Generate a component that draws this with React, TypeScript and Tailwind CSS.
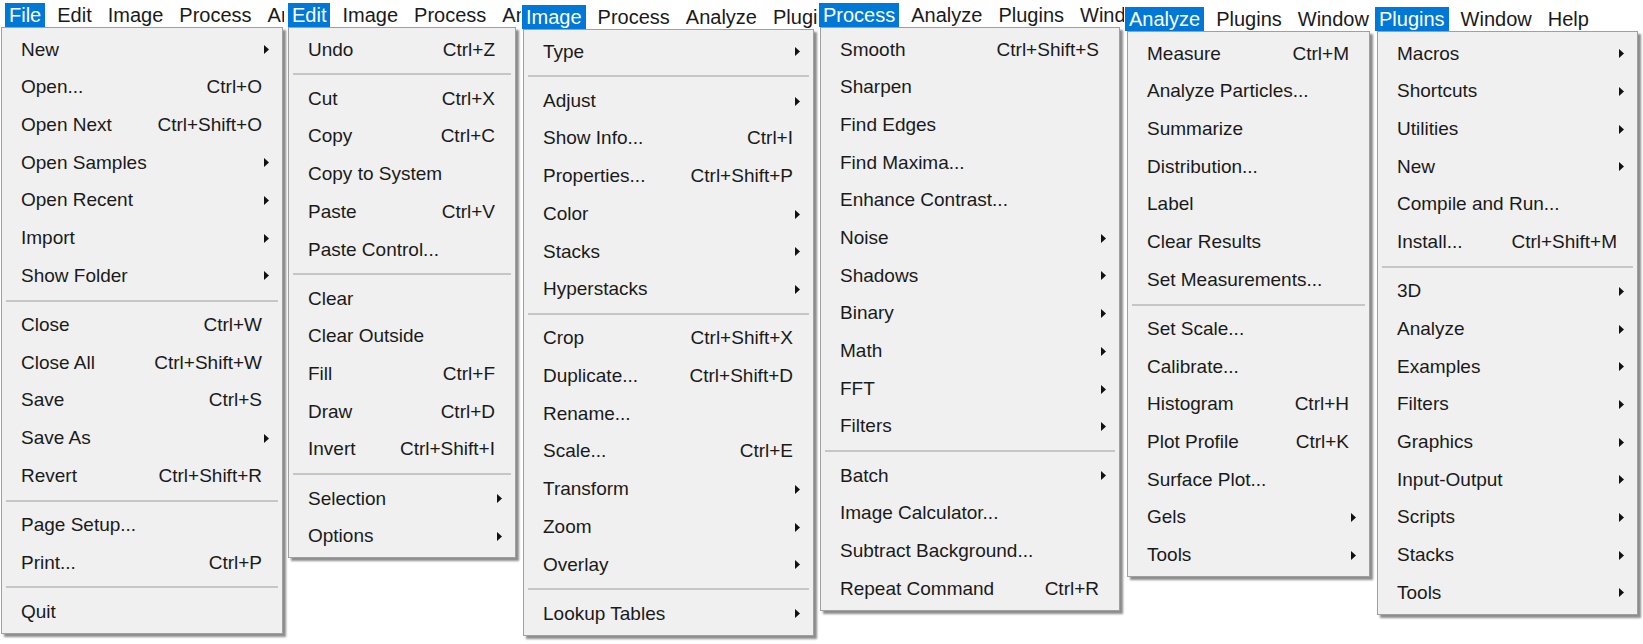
type Row = { label: string; sc?: string; sub?: boolean } | 'sep';

type PanelDef = {
  w: string;
  mt: string;
  barPl: string;
  bar: string[];
  ddMl: string;
  ddW: string;
  items: Row[];
};

const panels: PanelDef[] = [
  {
    w: 'w-[284px]',
    mt: 'mt-[3px]',
    barPl: 'pl-[5px]',
    bar: ['File', 'Edit', 'Image', 'Process', 'Analyze'],
    ddMl: 'ml-[1px]',
    ddW: 'w-[282px]',
    items: [
      { label: 'New', sub: true },
      { label: 'Open...', sc: 'Ctrl+O' },
      { label: 'Open Next', sc: 'Ctrl+Shift+O' },
      { label: 'Open Samples', sub: true },
      { label: 'Open Recent', sub: true },
      { label: 'Import', sub: true },
      { label: 'Show Folder', sub: true },
      'sep',
      { label: 'Close', sc: 'Ctrl+W' },
      { label: 'Close All', sc: 'Ctrl+Shift+W' },
      { label: 'Save', sc: 'Ctrl+S' },
      { label: 'Save As', sub: true },
      { label: 'Revert', sc: 'Ctrl+Shift+R' },
      'sep',
      { label: 'Page Setup...' },
      { label: 'Print...', sc: 'Ctrl+P' },
      'sep',
      { label: 'Quit' },
    ],
  },
  {
    w: 'w-[237px]',
    mt: 'mt-[3px]',
    barPl: 'pl-[4px]',
    bar: ['Edit', 'Image', 'Process', 'Analyze'],
    ddMl: 'ml-[4px]',
    ddW: 'w-[228px]',
    items: [
      { label: 'Undo', sc: 'Ctrl+Z' },
      'sep',
      { label: 'Cut', sc: 'Ctrl+X' },
      { label: 'Copy', sc: 'Ctrl+C' },
      { label: 'Copy to System' },
      { label: 'Paste', sc: 'Ctrl+V' },
      { label: 'Paste Control...' },
      'sep',
      { label: 'Clear' },
      { label: 'Clear Outside' },
      { label: 'Fill', sc: 'Ctrl+F' },
      { label: 'Draw', sc: 'Ctrl+D' },
      { label: 'Invert', sc: 'Ctrl+Shift+I' },
      'sep',
      { label: 'Selection', sub: true },
      { label: 'Options', sub: true },
    ],
  },
  {
    w: 'w-[297px]',
    mt: 'mt-[5px]',
    barPl: 'pl-[1px]',
    bar: ['Image', 'Process', 'Analyze', 'Plugins'],
    ddMl: 'ml-[2px]',
    ddW: 'w-[291px]',
    items: [
      { label: 'Type', sub: true },
      'sep',
      { label: 'Adjust', sub: true },
      { label: 'Show Info...', sc: 'Ctrl+I' },
      { label: 'Properties...', sc: 'Ctrl+Shift+P' },
      { label: 'Color', sub: true },
      { label: 'Stacks', sub: true },
      { label: 'Hyperstacks', sub: true },
      'sep',
      { label: 'Crop', sc: 'Ctrl+Shift+X' },
      { label: 'Duplicate...', sc: 'Ctrl+Shift+D' },
      { label: 'Rename...' },
      { label: 'Scale...', sc: 'Ctrl+E' },
      { label: 'Transform', sub: true },
      { label: 'Zoom', sub: true },
      { label: 'Overlay', sub: true },
      'sep',
      { label: 'Lookup Tables', sub: true },
    ],
  },
  {
    w: 'w-[306px]',
    mt: 'mt-[3px]',
    barPl: 'pl-[1px]',
    bar: ['Process', 'Analyze', 'Plugins', 'Window'],
    ddMl: 'ml-[2px]',
    ddW: 'w-[300px]',
    items: [
      { label: 'Smooth', sc: 'Ctrl+Shift+S' },
      { label: 'Sharpen' },
      { label: 'Find Edges' },
      { label: 'Find Maxima...' },
      { label: 'Enhance Contrast...' },
      { label: 'Noise', sub: true },
      { label: 'Shadows', sub: true },
      { label: 'Binary', sub: true },
      { label: 'Math', sub: true },
      { label: 'FFT', sub: true },
      { label: 'Filters', sub: true },
      'sep',
      { label: 'Batch', sub: true },
      { label: 'Image Calculator...' },
      { label: 'Subtract Background...' },
      { label: 'Repeat Command', sc: 'Ctrl+R' },
    ],
  },
  {
    w: 'w-[250px]',
    mt: 'mt-[7px]',
    barPl: 'pl-[1px]',
    bar: ['Analyze', 'Plugins', 'Window'],
    ddMl: 'ml-[3px]',
    ddW: 'w-[243px]',
    items: [
      { label: 'Measure', sc: 'Ctrl+M' },
      { label: 'Analyze Particles...' },
      { label: 'Summarize' },
      { label: 'Distribution...' },
      { label: 'Label' },
      { label: 'Clear Results' },
      { label: 'Set Measurements...' },
      'sep',
      { label: 'Set Scale...' },
      { label: 'Calibrate...' },
      { label: 'Histogram', sc: 'Ctrl+H' },
      { label: 'Plot Profile', sc: 'Ctrl+K' },
      { label: 'Surface Plot...' },
      { label: 'Gels', sub: true },
      { label: 'Tools', sub: true },
    ],
  },
  {
    w: 'w-[269px]',
    mt: 'mt-[7px]',
    barPl: 'pl-[1px]',
    bar: ['Plugins', 'Window', 'Help'],
    ddMl: 'ml-[3px]',
    ddW: 'w-[261px]',
    items: [
      { label: 'Macros', sub: true },
      { label: 'Shortcuts', sub: true },
      { label: 'Utilities', sub: true },
      { label: 'New', sub: true },
      { label: 'Compile and Run...' },
      { label: 'Install...', sc: 'Ctrl+Shift+M' },
      'sep',
      { label: '3D', sub: true },
      { label: 'Analyze', sub: true },
      { label: 'Examples', sub: true },
      { label: 'Filters', sub: true },
      { label: 'Graphics', sub: true },
      { label: 'Input-Output', sub: true },
      { label: 'Scripts', sub: true },
      { label: 'Stacks', sub: true },
      { label: 'Tools', sub: true },
    ],
  },
];

const Arrow = () => (
  <svg width="5" height="9" viewBox="0 0 5 9" className="block">
    <path d="M0 0 L5 4.5 L0 9 Z" fill="#111" />
  </svg>
);

function Panel({ p }: { p: PanelDef }) {
  return (
    <div className={`${p.w} ${p.mt} shrink-0 flex flex-col`}>
      {/* menu bar strip, the last entry is clipped by the next screenshot */}
      <div
        className={`flex h-[24px] items-stretch overflow-hidden whitespace-nowrap text-[20px] text-[#1a1a1a] ${p.barPl}`}
      >
        {p.bar.map((b, i) => (
          <span
            key={b}
            className={
              i === 0
                ? 'shrink-0 px-1 mr-2 leading-[24px] bg-[#0078d7] text-white'
                : i === p.bar.length - 1
                  ? 'min-w-0 overflow-hidden px-1 leading-[24px]'
                  : 'shrink-0 px-1 mr-2 leading-[24px]'
            }
          >
            {b}
          </span>
        ))}
      </div>
      <div
        className={`${p.ddMl} ${p.ddW} bg-[#f0f0f0] border border-[#a0a0a0] pt-[3px] pb-[2px] shadow-[3px_3px_2px_rgba(0,0,0,0.45)] text-[19px] text-[#1a1a1a] whitespace-nowrap`}
      >
        {p.items.map((it, i) =>
          it === 'sep' ? (
            <div key={i} className="h-[11.5px] flex items-center px-1">
              <div className="h-[2px] w-full bg-[#c6c6c6]" />
            </div>
          ) : (
            <div key={i} className="h-[37.7px] flex items-center pl-[19px]">
              <span>{it.label}</span>
              {it.sc && <span className="ml-auto pr-[20px]">{it.sc}</span>}
              {it.sub && (
                <span className="ml-auto pr-[13px]">
                  <Arrow />
                </span>
              )}
            </div>
          )
        )}
      </div>
    </div>
  );
}

export default function App() {
  return (
    <div className="w-[1643px] h-[644px] overflow-hidden bg-white flex items-start font-['Liberation_Sans',Arial,sans-serif]">
      {panels.map((p, i) => (
        <Panel key={i} p={p} />
      ))}
    </div>
  );
}
